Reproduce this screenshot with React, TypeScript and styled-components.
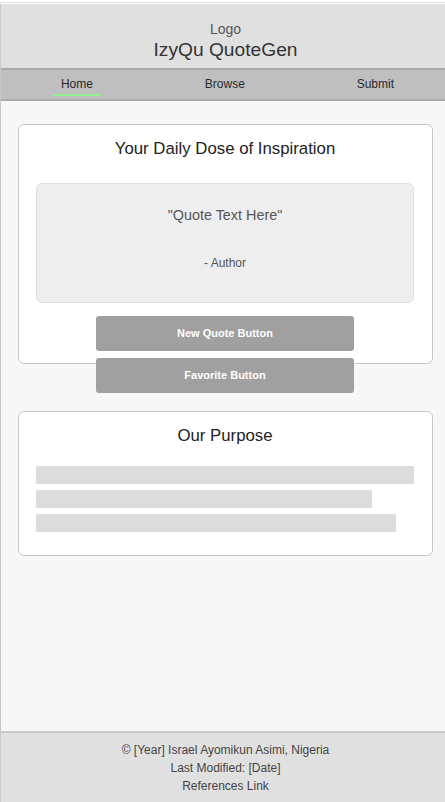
import styled, { createGlobalStyle } from 'styled-components';

const GlobalStyle = createGlobalStyle`
  html, body {
    margin: 0;
    padding: 0;
    background: #fff;
    overflow-x: hidden;
  }
  body {
    font-family: 'Liberation Sans', Arial, sans-serif;
    font-size: 12px;
  }
  * {
    box-sizing: border-box;
  }
`;

const navItems = ['Home', 'Browse', 'Submit'];
const purposeBars = [100, 89, 95.2];

export default function App() {
  return (
    <>
      <GlobalStyle />
      <Frame>
        <Page>
          <Header>
            <LogoText>Logo</LogoText>
            <SiteTitle>IzyQu QuoteGen</SiteTitle>
          </Header>
          <Nav>
            {navItems.map((item) => (
              <NavLink key={item} $active={item === 'Home'}>
                {item}
              </NavLink>
            ))}
          </Nav>
          <Main>
            <QuoteCard>
              <CardTitle>Your Daily Dose of Inspiration</CardTitle>
              <QuoteBox>
                <QuoteText>"Quote Text Here"</QuoteText>
                <Author>- Author</Author>
              </QuoteBox>
              <ButtonStack>
                <Button>New Quote Button</Button>
                <Button>Favorite Button</Button>
              </ButtonStack>
            </QuoteCard>
            <PurposeCard>
              <CardTitle>Our Purpose</CardTitle>
              <Bars>
                {purposeBars.map((w, i) => (
                  <Bar key={i} style={{ width: `${w}%` }} />
                ))}
              </Bars>
            </PurposeCard>
          </Main>
          <Footer>
            <div>© [Year] Israel Ayomikun Asimi, Nigeria</div>
            <div>Last Modified: [Date]</div>
            <div>References Link</div>
          </Footer>
        </Page>
      </Frame>
    </>
  );
}

const Frame = styled.div`
  margin-top: 2px;
  border-top: 1px solid #e2e2e2;
  padding-top: 1px;
  min-height: calc(100vh - 2px);
  display: flex;
  flex-direction: column;
`;

const Page = styled.div`
  flex: 1;
  width: 450px;
  display: flex;
  flex-direction: column;
  border-left: 1px solid #c8c8c8;
`;

const Header = styled.header`
  background: #e0e0e0;
  height: 66px;
  display: flex;
  flex-direction: column;
  align-items: center;
  justify-content: center;
  padding-top: 11px;
  border-bottom: 2px solid #aaaaaa;
`;

const LogoText = styled.div`
  font-size: 14px;
  line-height: 17px;
  color: #555;
`;

const SiteTitle = styled.h1`
  margin: 0;
  font-size: 19.2px;
  line-height: 24px;
  font-weight: normal;
  color: #333;
`;

const Nav = styled.nav`
  background: #bfbfbf;
  height: 31px;
  display: flex;
  justify-content: space-around;
  align-items: center;
  padding-left: 4px;
  border-bottom: 2px solid #aaaaaa;
`;

const NavLink = styled.span<{ $active?: boolean }>`
  font-size: 12px;
  line-height: 15px;
  color: #2a2a2a;
  padding: 0 8px 2px;
  border-bottom: 2px solid ${(p) => (p.$active ? '#90ee90' : 'transparent')};
  margin-top: 3px;
`;

const Main = styled.main`
  flex: 1;
  background: #f7f7f7;
  padding: 23px 17px;
  display: flex;
  flex-direction: column;
  gap: 47px;
`;

const Card = styled.section`
  background: #fff;
  border: 1px solid #c8c8c8;
  border-radius: 6px;
  padding: 13px 18px 23px 17px;
`;

const QuoteCard = styled(Card)`
  height: 240px;
`;

const PurposeCard = styled(Card)``;

const CardTitle = styled.h2`
  margin: 0;
  font-size: 16.8px;
  line-height: 22px;
  font-weight: normal;
  color: #222;
  text-align: center;
`;

const QuoteBox = styled.div`
  margin-top: 23px;
  background: #eeeeee;
  border: 1px solid #e0e0e0;
  border-radius: 6px;
  height: 120px;
  padding: 23px 16px 0;
  text-align: center;
  color: #555;
`;

const QuoteText = styled.p`
  margin: 0 0 32px;
  font-size: 14.4px;
  line-height: 17px;
`;

const Author = styled.p`
  margin: 0;
  font-size: 12px;
  line-height: 15px;
`;

const ButtonStack = styled.div`
  margin-top: 13px;
  display: flex;
  flex-direction: column;
  align-items: center;
  gap: 7px;
`;

const Button = styled.button`
  width: 258px;
  height: 35px;
  border: none;
  border-radius: 3px;
  background: #a0a0a0;
  color: #fff;
  font-family: inherit;
  font-size: 11px;
  font-weight: bold;
  padding: 0 0 2px;
  cursor: pointer;
`;

const Bars = styled.div`
  margin-top: 19px;
  display: flex;
  flex-direction: column;
  gap: 6px;
`;

const Bar = styled.div`
  height: 18px;
  background: #dcdcdc;
`;

const Footer = styled.footer`
  background: #e0e0e0;
  border-top: 2px solid #c8c8c8;
  padding: 8px 0 7px;
  text-align: center;
  font-size: 12px;
  line-height: 18px;
  color: #444;
`;
